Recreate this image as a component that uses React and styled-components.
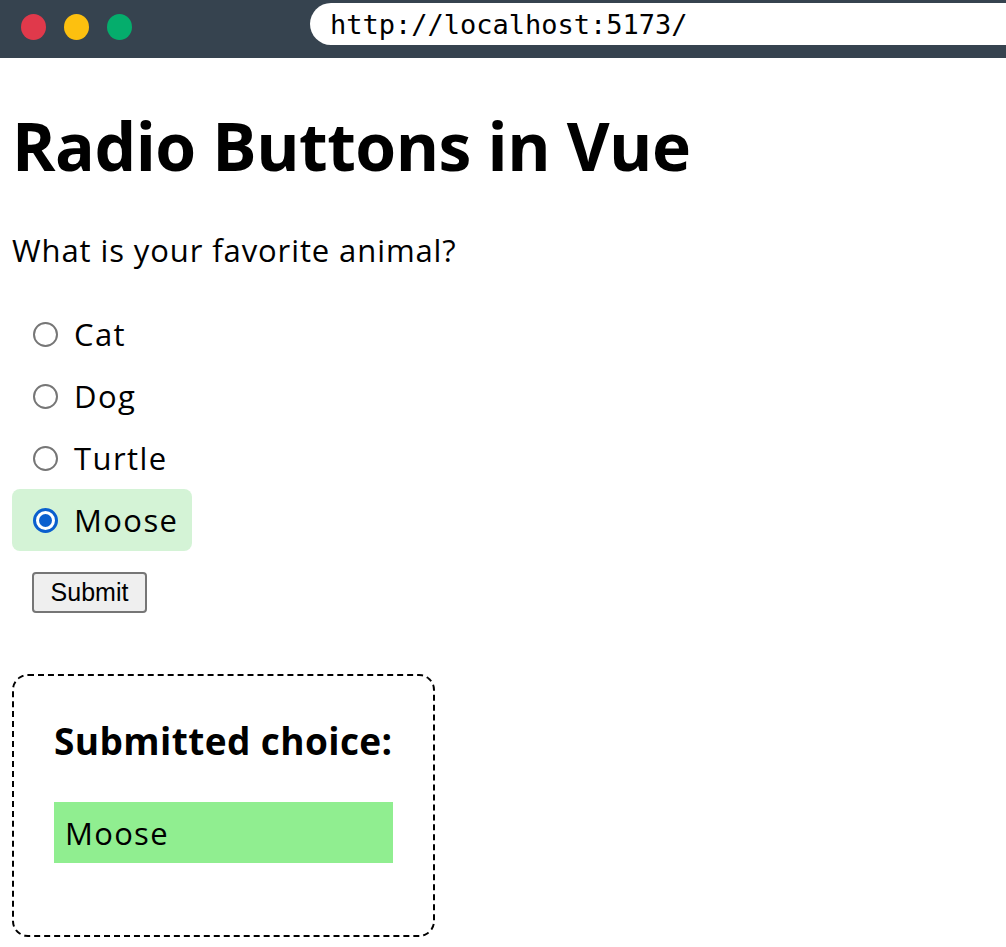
import React, { useState } from "react";
import styled, { createGlobalStyle } from "styled-components";

const GlobalStyle = createGlobalStyle`
  body {
    margin: 0;
    background: #fff;
    font-family: "Open Sans", "Noto Sans", sans-serif;
    color: #000;
  }
`;

const animals = ["Cat", "Dog", "Turtle", "Moose"];

const TopBar = styled.div`
  height: 58px;
  background: #36434f;
  display: flex;
  align-items: flex-start;
`;

const Dots = styled.div`
  display: flex;
  gap: 18px;
  padding: 14px 0 0 21px;
  width: 289px;
`;

const Dot = styled.span`
  width: 25px;
  height: 26px;
  border-radius: 50%;
  background: ${(p) => p.color};
`;

const UrlPill = styled.div`
  flex: 1;
  margin-top: 3px;
  height: 42px;
  background: #fff;
  border-radius: 22px 0 0 22px;
  display: flex;
  align-items: center;
  padding-left: 20px;
  font-family: "DejaVu Sans Mono", "Liberation Mono", monospace;
  font-size: 27px;
`;

const Main = styled.main`
  padding: 0 12px;
`;

const Title = styled.h1`
  font-size: 66px;
  font-weight: 700;
  letter-spacing: -0.5px;
  margin: 42px 0 0;
  line-height: 90px;
`;

const Question = styled.p`
  font-size: 31px;
  letter-spacing: 0.9px;
  margin: 40px 0 33px;
  line-height: 40px;
`;

const Options = styled.div`
  display: flex;
  flex-direction: column;
  align-items: flex-start;
`;

const Option = styled.label`
  display: flex;
  align-items: center;
  gap: 16px;
  height: 62px;
  padding: 0 14px 0 21px;
  border-radius: 8px;
  background: ${(p) => (p.selected ? "#d4f3d6" : "transparent")};
  font-size: 31px;
  letter-spacing: 1.4px;
  cursor: pointer;
`;

const Radio = styled.input.attrs({ type: "radio" })`
  appearance: none;
  margin: 0;
  width: 25px;
  height: 25px;
  border-radius: 50%;
  border: 2px solid #767676;
  background: #fff;
  display: grid;
  place-items: center;

  &:checked {
    border: 3px solid #0a5fce;
  }

  &:checked::after {
    content: "";
    width: 13px;
    height: 13px;
    border-radius: 50%;
    background: #0a5fce;
  }
`;

const SubmitButton = styled.button`
  margin: 21px 0 0 20px;
  width: 115px;
  height: 41px;
  font-family: "Liberation Sans", Arial, sans-serif;
  font-size: 25px;
  background: #efefef;
  border: 2px solid #767676;
  border-radius: 4px;
  padding: 0;
  color: #000;
`;

const ResultBox = styled.section`
  margin-top: 61px;
  width: 423px;
  height: 263px;
  box-sizing: border-box;
  border: 2px dashed #000;
  border-radius: 16px;
  padding: 38px 40px 0 40px;
`;

const ResultTitle = styled.h2`
  font-size: 37px;
  font-weight: 700;
  letter-spacing: 0.4px;
  margin: 0 0 34px;
  line-height: 54px;
`;

const ResultValue = styled.div`
  background: #90ee90;
  height: 61px;
  display: flex;
  align-items: center;
  padding-left: 11px;
  font-size: 31px;
  letter-spacing: 1.3px;
`;

export default function App() {
  const [choice, setChoice] = useState("Moose");
  const [submitted, setSubmitted] = useState("Moose");

  return (
    <>
      <GlobalStyle />
      <TopBar>
        <Dots>
          <Dot color="#e0394b" />
          <Dot color="#fdc00f" />
          <Dot color="#05ad6c" />
        </Dots>
        <UrlPill>http://localhost:5173/</UrlPill>
      </TopBar>
      <Main>
        <Title>Radio Buttons in Vue</Title>
        <Question>What is your favorite animal?</Question>
        <Options>
          {animals.map((a) => (
            <Option key={a} selected={choice === a}>
              <Radio
                name="animal"
                value={a}
                checked={choice === a}
                onChange={() => setChoice(a)}
              />
              {a}
            </Option>
          ))}
        </Options>
        <SubmitButton onClick={() => setSubmitted(choice)}>Submit</SubmitButton>
        <ResultBox>
          <ResultTitle>Submitted choice:</ResultTitle>
          <ResultValue>{submitted}</ResultValue>
        </ResultBox>
      </Main>
    </>
  );
}
